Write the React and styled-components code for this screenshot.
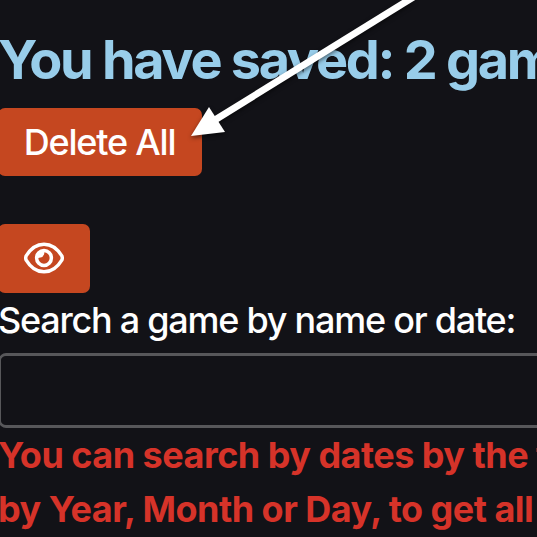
import React from 'react';
import styled, { createGlobalStyle } from 'styled-components';

const Global = createGlobalStyle`
  * { box-sizing: border-box; }
  body { margin: 0; background: #121217; overflow: hidden; font-family: Inter, sans-serif; }
`;
const Page = styled.main`
  position: relative;
  width: 537px;
  height: 537px;
  overflow: hidden;
  background: #121217;
  color: #fff;
  display: flex;
  flex-direction: column;
  align-items: flex-start;
  white-space: nowrap;
`;
const Title = styled.h1`
  margin: 32px 0 20px -2px;
  font-size: 54px;
  line-height: 56px;
  font-weight: 680;
  letter-spacing: -2.3px;
  color: #98cdea;
`;
const Button = styled.button`
  margin: 0 0 ${p => p.$gap || 0}px -2px;
  width: ${p => p.$width}px;
  height: ${p => p.$height}px;
  padding: 0 1px 0 0;
  border: 0;
  border-radius: 7px;
  background: #c54720;
  color: #fff;
  font: 450 36px/54px Inter, sans-serif;
  letter-spacing: -1.2px;
  display: flex;
  align-items: center;
  justify-content: center;
`;
const Label = styled.label`
  height: 60px;
  font-size: 36px;
  font-weight: 450;
  line-height: 54px;
  letter-spacing: -1.25px;
  margin-left: -2px;
`;
const Input = styled.input`
  width: 640px;
  height: 75px;
  flex: none;
  margin-left: -1px;
  border: 3px solid #57575a;
  border-left-width: 2px;
  border-radius: 7px;
  background: #121217;
  color: #fff;
`;
const Hint = styled.p`
  margin: 0 0 0 -2px;
  font-size: 36px;
  line-height: 54px;
  font-weight: 700;
  letter-spacing: -0.52px;
  color: #d63329;
`;
const EyeIcon = styled.svg`
  width: 42px;
  height: 34px;
  margin: 0 0 2px 1px;
`;
const Arrow = styled.svg`
  position: absolute;
  left: 0;
  top: 0;
  pointer-events: none;
  filter: drop-shadow(0 2px 2px #0008);
`;

export default function App() {
  return (
    <Page>
      <Global />
      <Title>You have saved: 2 games</Title>
      <Button $width={204} $height={68} $gap={48}>Delete All</Button>
      <Button $width={92} $height={69} aria-label="Show games">
        <EyeIcon viewBox="0 0 42 34" fill="none" stroke="currentColor" strokeWidth="3.5">
          <path d="M3 15.200C7 8.500 13.100 3.200 21 3.200S35 8.500 39 15.200Q39.600 17 39 18.800C35 25.500 28.900 30.800 21 30.800S7 25.500 3 18.800Q2.400 17 3 15.200Z" />
          <circle cx="21" cy="17" r="7.400" />
          <path fill="currentColor" stroke="none" d="M21 9C21.500 10 21.500 12 21 13.500Q20 16 17.500 16.500Q15 17 13 17C13 12 16 9 21 9Z" />
        </EyeIcon>
      </Button>
      <Label htmlFor="search">Search a game by name or date:</Label>
      <Input id="search" />
      <Hint>You can search by dates by the following<br />by Year, Month or Day, to get all games</Hint>
      <Arrow width="537" height="160">
        <path d="M420-7 210 123" stroke="#fff" strokeWidth="6.800" />
        <path d="M191 136 209 107 225 132Z" fill="#fff" />
      </Arrow>
    </Page>
  );
}
